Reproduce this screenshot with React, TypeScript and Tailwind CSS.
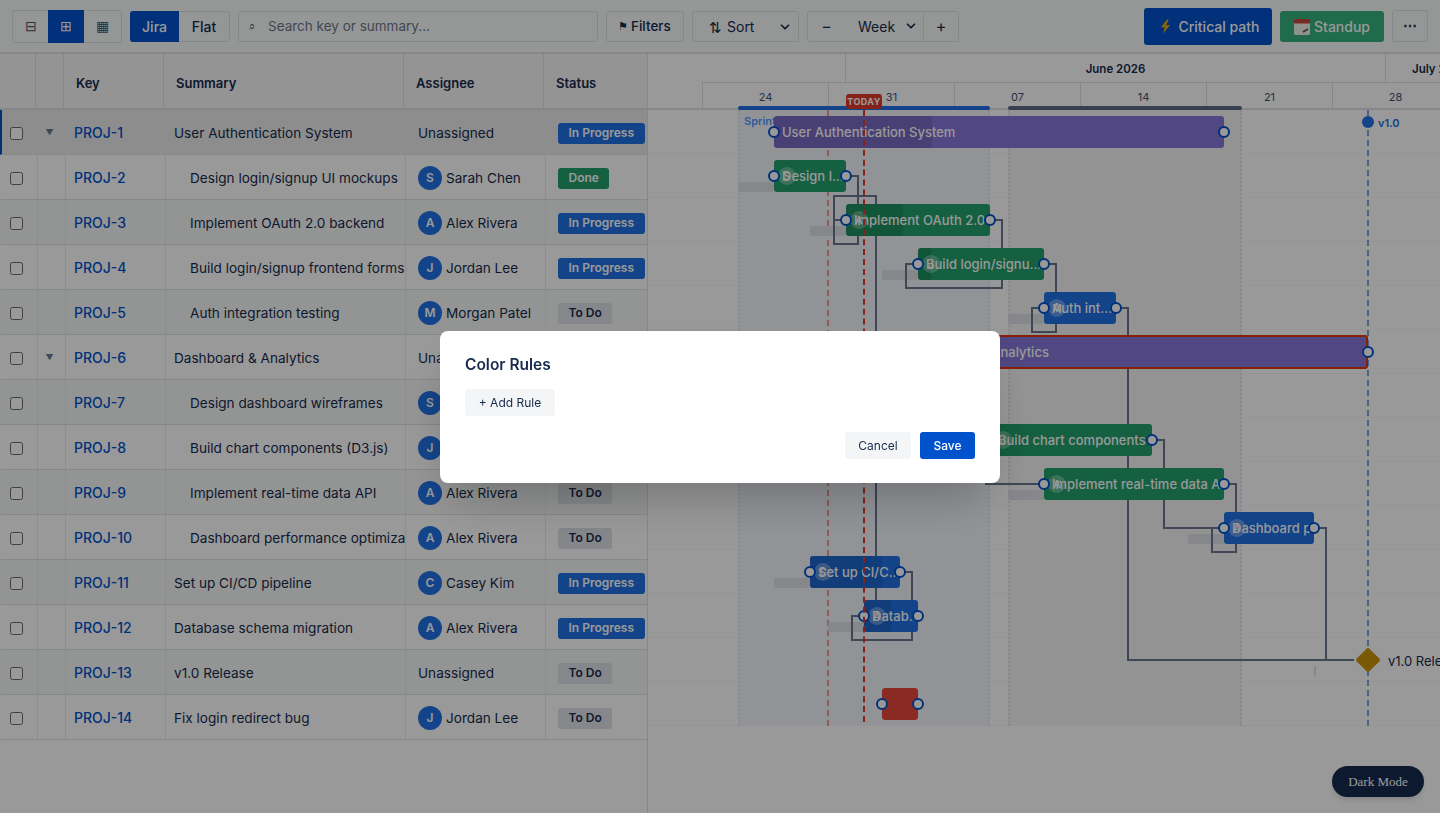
import { ChevronDown } from "lucide-react"

type Row = {
  key: string
  summary: string
  child?: boolean
  parent?: boolean
  who?: string
  status: "In Progress" | "Done" | "To Do"
}

const rows: Row[] = [
  { key: "PROJ-1", summary: "User Authentication System", parent: true, status: "In Progress" },
  { key: "PROJ-2", summary: "Design login/signup UI mockups", child: true, who: "Sarah Chen", status: "Done" },
  { key: "PROJ-3", summary: "Implement OAuth 2.0 backend", child: true, who: "Alex Rivera", status: "In Progress" },
  { key: "PROJ-4", summary: "Build login/signup frontend forms", child: true, who: "Jordan Lee", status: "In Progress" },
  { key: "PROJ-5", summary: "Auth integration testing", child: true, who: "Morgan Patel", status: "To Do" },
  { key: "PROJ-6", summary: "Dashboard & Analytics", parent: true, status: "In Progress" },
  { key: "PROJ-7", summary: "Design dashboard wireframes", child: true, who: "Sarah Chen", status: "Done" },
  { key: "PROJ-8", summary: "Build chart components (D3.js)", child: true, who: "Jordan Lee", status: "In Progress" },
  { key: "PROJ-9", summary: "Implement real-time data API", child: true, who: "Alex Rivera", status: "To Do" },
  { key: "PROJ-10", summary: "Dashboard performance optimization", child: true, who: "Alex Rivera", status: "To Do" },
  { key: "PROJ-11", summary: "Set up CI/CD pipeline", who: "Casey Kim", status: "In Progress" },
  { key: "PROJ-12", summary: "Database schema migration", who: "Alex Rivera", status: "In Progress" },
  { key: "PROJ-13", summary: "v1.0 Release", status: "To Do" },
  { key: "PROJ-14", summary: "Fix login redirect bug", who: "Jordan Lee", status: "To Do" },
]

const statusClass = {
  "In Progress": "bg-[#2172e5] text-white",
  Done: "bg-[#22a06b] text-white",
  "To Do": "bg-[#dfe1e6] text-[#172b4d]",
}

// page coordinates, x0 is subtracted when drawn
const GX = 648
const GY = 110

const PURPLE = "#8777d9"
const GREEN = "#22a06b"
const BLUE = "#2172e5"
const RED = "#e5493a"

const bars = [
  { x: 774, w: 450, y: 116, color: PURPLE, title: "User Authentication System", done: 158 },
  { x: 774, w: 72, y: 160, color: GREEN, title: "Design l...", who: "S" },
  { x: 846, w: 144, y: 204, color: GREEN, title: "Implement OAuth 2.0 backend", who: "A", done: 57 },
  { x: 918, w: 126, y: 248, color: GREEN, title: "Build login/signu...", who: "J", done: 13 },
  { x: 1044, w: 72, y: 292, color: BLUE, title: "Auth int...", who: "M" },
  { x: 898, w: 470, y: 336, color: PURPLE, title: "Dashboard & Analytics", critical: true },
  { x: 990, w: 162, y: 424, color: GREEN, title: "Build chart components (D3.js)", who: "J" },
  { x: 1044, w: 180, y: 468, color: GREEN, title: "Implement real-time data API", who: "A" },
  { x: 1224, w: 90, y: 512, color: BLUE, title: "Dashboard performance", who: "A" },
  { x: 810, w: 90, y: 556, color: BLUE, title: "Set up CI/C...", who: "C", done: 72 },
  { x: 864, w: 54, y: 600, color: BLUE, title: "Datab...", who: "A", done: 27 },
  { x: 882, w: 36, y: 688, color: RED, title: "" },
]

const slack = [
  { x: 738, w: 36, y: 182 },
  { x: 810, w: 36, y: 226 },
  { x: 882, w: 36, y: 270 },
  { x: 1008, w: 36, y: 314 },
  { x: 1008, w: 36, y: 490 },
  { x: 1188, w: 36, y: 534 },
  { x: 774, w: 36, y: 578 },
  { x: 828, w: 36, y: 622 },
  { x: 1314, w: 2, y: 666 },
]

const links = [
  "M846 176H858V244H834V220H846",
  "M834 220V196H876V610",
  "M990 220H1002V288H906V264H918",
  "M1044 264H1056V332H1032V308H1044",
  "M1116 308H1128V660H1354",
  "M1152 440H1164V528H1224",
  "M985 484H1044",
  "M1224 484H1236V552H1212V528H1224",
  "M1314 528H1326V660",
  "M900 572H912V640H852V616H864",
]

const Connector = ({ x, y }: { x: number; y: number }) => (
  <div
    className="absolute w-3 h-3 rounded-full bg-white border-2 border-[#0052cc]"
    style={{ left: x - GX - 6, top: y - GY - 6 }}
  />
)

const Btn = ({ children, className = "" }: { children: React.ReactNode; className?: string }) => (
  <div className={`flex items-center border border-[#dfe1e6] rounded-[3px] h-[31px] text-sm text-[#172b4d] ${className}`}>
    {children}
  </div>
)

const App = () => {
  return (
    <div className="relative h-screen w-screen overflow-hidden bg-white font-['Inter',sans-serif] text-[#172b4d]">
      <div className="h-[54px] flex items-center border-b-2 border-[#dfe1e6] bg-[#f9fcfb] pl-3 pr-3">
        <div className="flex h-[33px] w-[110px] border border-[#dfe1e6] rounded-[3px] text-sm">
          <div className="w-[35px] flex items-center justify-center text-[#42526e]">⊟</div>
          <div className="w-[36px] -my-px flex items-center justify-center bg-[#0052cc] text-white">⊞</div>
          <div className="w-[37px] flex items-center justify-center text-[#42526e]">▦</div>
        </div>
        <div className="flex h-[31px] w-[100px] ml-2 border border-[#dfe1e6] rounded-[3px] text-sm font-medium">
          <div className="w-[49px] -ml-px -my-px pt-px flex items-center justify-center bg-[#0052cc] text-white rounded-l-[3px]">Jira</div>
          <div className="flex-1 pt-px flex items-center justify-center">Flat</div>
        </div>
        <Btn className="w-[360px] ml-2 pl-[10px] pt-0.5">
          <span className="w-[19px] text-[11px] text-[#42526e]">⌕</span>
          <span className="text-[13.5px] text-[#6b778c]">Search key or summary...</span>
        </Btn>
        <Btn className="w-[78px] ml-2 pl-[11px] pt-0.5 gap-[3px]">
          <span className="text-[11px]">⚑</span>
          <span className="text-[13.5px] font-medium">Filters</span>
        </Btn>
        <Btn className="w-[107px] ml-2 pl-4 pt-0.5">
          <span className="text-[15px] leading-none">⇅</span>
          <span className="ml-[5px]">Sort</span>
          <ChevronDown size={14} strokeWidth={3} className="ml-auto mr-[6px]" />
        </Btn>
        <Btn className="w-[152px] ml-2">
          <span className="w-[37px] text-center text-base">−</span>
          <span className="ml-[13px] pt-0.5">Week</span>
          <ChevronDown size={14} strokeWidth={3} className="ml-[9px]" />
          <span className="ml-auto w-[35px] h-full flex items-center justify-center border-l border-[#dfe1e6] text-base">+</span>
        </Btn>
        <div className="ml-auto flex items-center h-[37px] w-[128px] justify-center gap-[7px] pl-1 pt-px rounded-[3px] bg-[#0052cc] text-white text-sm font-medium">
          <svg width="11" height="15" viewBox="0 0 14 18">
            <path d="M9 0L1 10h5l-2 8 9-11H8l3-7z" fill="#e0a81c" />
          </svg>
          Critical path
        </div>
        <div className="ml-2 flex items-center h-[31px] w-[104px] justify-center gap-1 pt-px rounded-[3px] bg-[#36b37e] text-white text-sm font-medium">
          <svg width="16" height="16" viewBox="0 0 16 16">
            <rect x="0" y="0" width="16" height="16" rx="1.5" fill="#f1f0ee" />
            <rect x="0" y="0" width="16" height="4.5" rx="1" fill="#c9483f" />
            <path d="M9 13l5-3" stroke="#555" strokeWidth="1.5" />
          </svg>
          Standup
        </div>
        <div className="ml-2 flex items-center justify-center h-[32px] w-[36px] rounded-[3px] border border-[#dfe1e6] text-sm font-bold">
          ⋯
        </div>
      </div>

      <div className="flex h-[759px]">
        <div className="w-[648px] shrink-0 border-r border-[#dfe1e6] overflow-hidden">
          <div className="flex h-[56px] bg-[#f7f7f7] border-b-2 border-[#dfe1e6] text-[13px] font-semibold">
            <div className="w-[36px] border-r border-[#dfe1e6]" />
            <div className="w-[28px] border-r border-[#dfe1e6]" />
            <div className="w-[100px] border-r border-[#dfe1e6] flex items-center pl-3 pt-1.5">Key</div>
            <div className="w-[240px] border-r border-[#dfe1e6] flex items-center pl-3 pt-1.5">Summary</div>
            <div className="w-[140px] border-r border-[#dfe1e6] flex items-center pl-3 pt-1.5">Assignee</div>
            <div className="flex-1 flex items-center pl-3 pt-1.5">Status</div>
          </div>
          {rows.map((r, i) => (
            <div
              key={r.key}
              className={`flex h-[45px] border-b border-[#dfe1e6] border-l-2 text-[13.6px] ${
                i === 0
                  ? "bg-[#ebebeb] border-l-[#0052cc]"
                  : i % 2 === 1
                    ? "bg-white border-l-transparent"
                    : "bg-[#f6f8f7] border-l-transparent"
              }`}
            >
              <div className="w-[36px] border-r border-[#ebecf0] flex items-center pl-2 pt-0.5">
                <div className="w-[13px] h-[13px] rounded-[2.5px] border border-[#6b6b6b] bg-white" />
              </div>
              <div className="w-[28px] border-r border-[#ebecf0] flex items-center justify-center pr-1 text-[8px] text-[#6b778c]">
                {r.parent ? "▼" : ""}
              </div>
              <div className="w-[100px] border-r border-[#ebecf0] flex items-center pl-2 pt-0.5 text-sm font-medium text-[#0052cc]">
                {r.key}
              </div>
              <div className={`w-[240px] border-r border-[#ebecf0] flex items-center pt-0.5 overflow-hidden whitespace-nowrap ${r.child ? "pl-6" : "pl-2"}`}>
                {r.summary}
              </div>
              <div className="w-[140px] border-r border-[#ebecf0] flex items-center pl-3 pt-0.5 gap-1">
                {r.who ? (
                  <>
                    <span className="w-6 h-6 rounded-full bg-[#2172e5] text-white text-xs font-semibold flex items-center justify-center">
                      {r.who[0]}
                    </span>
                    {r.who}
                  </>
                ) : (
                  "Unassigned"
                )}
              </div>
              <div className="flex-1 flex items-center pl-3 pt-0.5">
                <span className={`px-[10.5px] h-[21px] flex items-center rounded-[3px] text-xs font-semibold whitespace-nowrap ${statusClass[r.status]}`}>
                  {r.status}
                </span>
              </div>
            </div>
          ))}
        </div>

        <div className="flex-1 min-w-0 overflow-hidden">
          <div className="flex h-[28px] pt-[3px] text-[11.5px] font-semibold">
            <div className="w-[198px] shrink-0 -mt-[3px] border-r border-[#dfe1e6]" />
            <div className="w-[540px] shrink-0 -mt-[3px] pt-[3px] border-r border-[#dfe1e6] flex items-center justify-center">June 2026</div>
            <div className="flex-1 flex items-center pl-[26px] whitespace-nowrap">July 2026</div>
          </div>
          <div className="flex h-[28px] pl-[54px] border-b-2 border-[#dfe1e6] text-[11px] text-[#42526e]">
            {["24", "31", "07", "14", "21", "28"].map(d => (
              <div key={d} className="w-[126px] shrink-0 border-l border-t border-[#dfe1e6] flex items-center justify-center pt-[3px]">
                {d}
              </div>
            ))}
          </div>

          <div className="relative h-[703px]">
            {Array.from({ length: 14 }).map((_, i) => (
              <div
                key={i}
                className="absolute left-0 right-0 h-[44px] border-b border-[#f8f8f8]"
                style={{ top: i * 44 }}
              />
            ))}

            <div className="absolute top-0 left-[90px] w-[252px] h-[616px] bg-[#f4f6fc] border-x-2 border-dotted border-[#dfe6f4]" />
            <div className="absolute top-0 left-[360px] w-[234px] h-[616px] bg-[#f6f6f6] border-x-2 border-dotted border-[#e4e4e4]" />
            <div className="absolute -top-1 left-[90px] w-[252px] h-1 rounded-full bg-[#2172e5]" />
            <div className="absolute -top-1 left-[360px] w-[234px] h-1 rounded-full bg-[#5e6c84]" />
            <div className="absolute top-[3px] left-[96px] text-[11px] font-semibold text-[#4c9aff]">Sprint 1</div>

            <div className="absolute top-0 left-[179px] h-[616px] border-l-2 border-dashed border-[#e99a91]" />
            <div className="absolute top-0 left-[719px] h-[616px] border-l-2 border-dashed border-[#7ba4e4]" />

            {slack.map(s => (
              <div
                key={s.x + "-" + s.y}
                className="absolute h-[10px] rounded-[2px] bg-[#dfe1e6]"
                style={{ left: s.x - GX, top: s.y - GY, width: s.w }}
              />
            ))}

            <svg className="absolute inset-0 w-[792px] h-[703px]" viewBox="648 110 792 703" fill="none">
              {links.map(d => (
                <path key={d} d={d} stroke="#6b778c" strokeWidth="2" />
              ))}
            </svg>

            {bars.map(b => (
              <div
                key={b.y}
                className={`absolute rounded-[3px] overflow-hidden ${b.critical ? "h-[34px] -mt-px border-2 border-[#de350b]" : "h-[32px]"}`}
                style={{ left: b.x - GX, top: b.y - GY, width: b.w, backgroundColor: b.color }}
              >
                {b.done ? <div className="absolute inset-y-0 left-0 bg-black/10" style={{ width: b.done }} /> : null}
                {b.who ? (
                  <div className="absolute left-1 top-[7px] w-[18px] h-[18px] rounded-full bg-white/30 flex items-center justify-center text-[10px] font-semibold text-white">
                    {b.who}
                  </div>
                ) : null}
                <div className="relative h-full flex items-center pl-2 pt-0.5 text-[13px] font-medium text-white whitespace-nowrap">
                  {b.title}
                </div>
              </div>
            ))}

            {bars.map(b => (
              <div key={"c" + b.y}>
                <Connector x={b.x} y={b.y + 16} />
                <Connector x={b.x + b.w} y={b.y + 16} />
              </div>
            ))}

            <div className="absolute top-0 left-[215px] h-[612px] border-l-2 border-dashed border-[#de3a2b]" />
            <div className="absolute -top-4 left-[198px] w-[36px] h-[15px] rounded-[3px] bg-[#de3a2b] text-white text-[9px] font-bold tracking-[0.4px] flex items-center justify-center">
              TODAY
            </div>

            <div className="absolute top-[6px] left-[714px] w-3 h-3 rounded-full bg-[#2172e5]" />
            <div className="absolute top-[5px] left-[730px] text-[11px] font-semibold text-[#2172e5]">v1.0</div>

            <div className="absolute top-[541px] left-[711px] w-[18px] h-[18px] rotate-45 rounded-[2px] bg-[#c9960a]" />
            <div className="absolute top-[542px] left-[740px] text-[13px] whitespace-nowrap">v1.0 Release</div>
          </div>
        </div>
      </div>

      <div className="absolute right-4 bottom-4 w-[92px] h-[31px] rounded-full bg-[#172b4d] text-white text-[13px] font-['Liberation_Serif',serif] flex items-center justify-center shadow-md">
        Dark Mode
      </div>

      <div className="fixed inset-0 bg-black/40 flex items-center justify-center">
        <div className="w-[560px] rounded-lg bg-white px-[25px] py-6 shadow-2xl">
          <h2 className="text-[15.5px] leading-5 font-semibold text-[#172b4d] mb-3.5">Color Rules</h2>
          <div className="w-[90px] h-[27px] pt-0.5 rounded-[3px] bg-[#f4f5f7] text-xs flex items-center justify-center">
            + Add Rule
          </div>
          <div className="flex justify-end gap-[9px] mt-4">
            <div className="w-[66px] h-[27px] pt-0.5 rounded-[3px] bg-[#f4f5f7] text-xs flex items-center justify-center">
              Cancel
            </div>
            <div className="w-[55px] h-[27px] pt-0.5 rounded-[3px] bg-[#0052cc] text-white text-xs font-medium flex items-center justify-center">
              Save
            </div>
          </div>
        </div>
      </div>
    </div>
  )
}

export default App
